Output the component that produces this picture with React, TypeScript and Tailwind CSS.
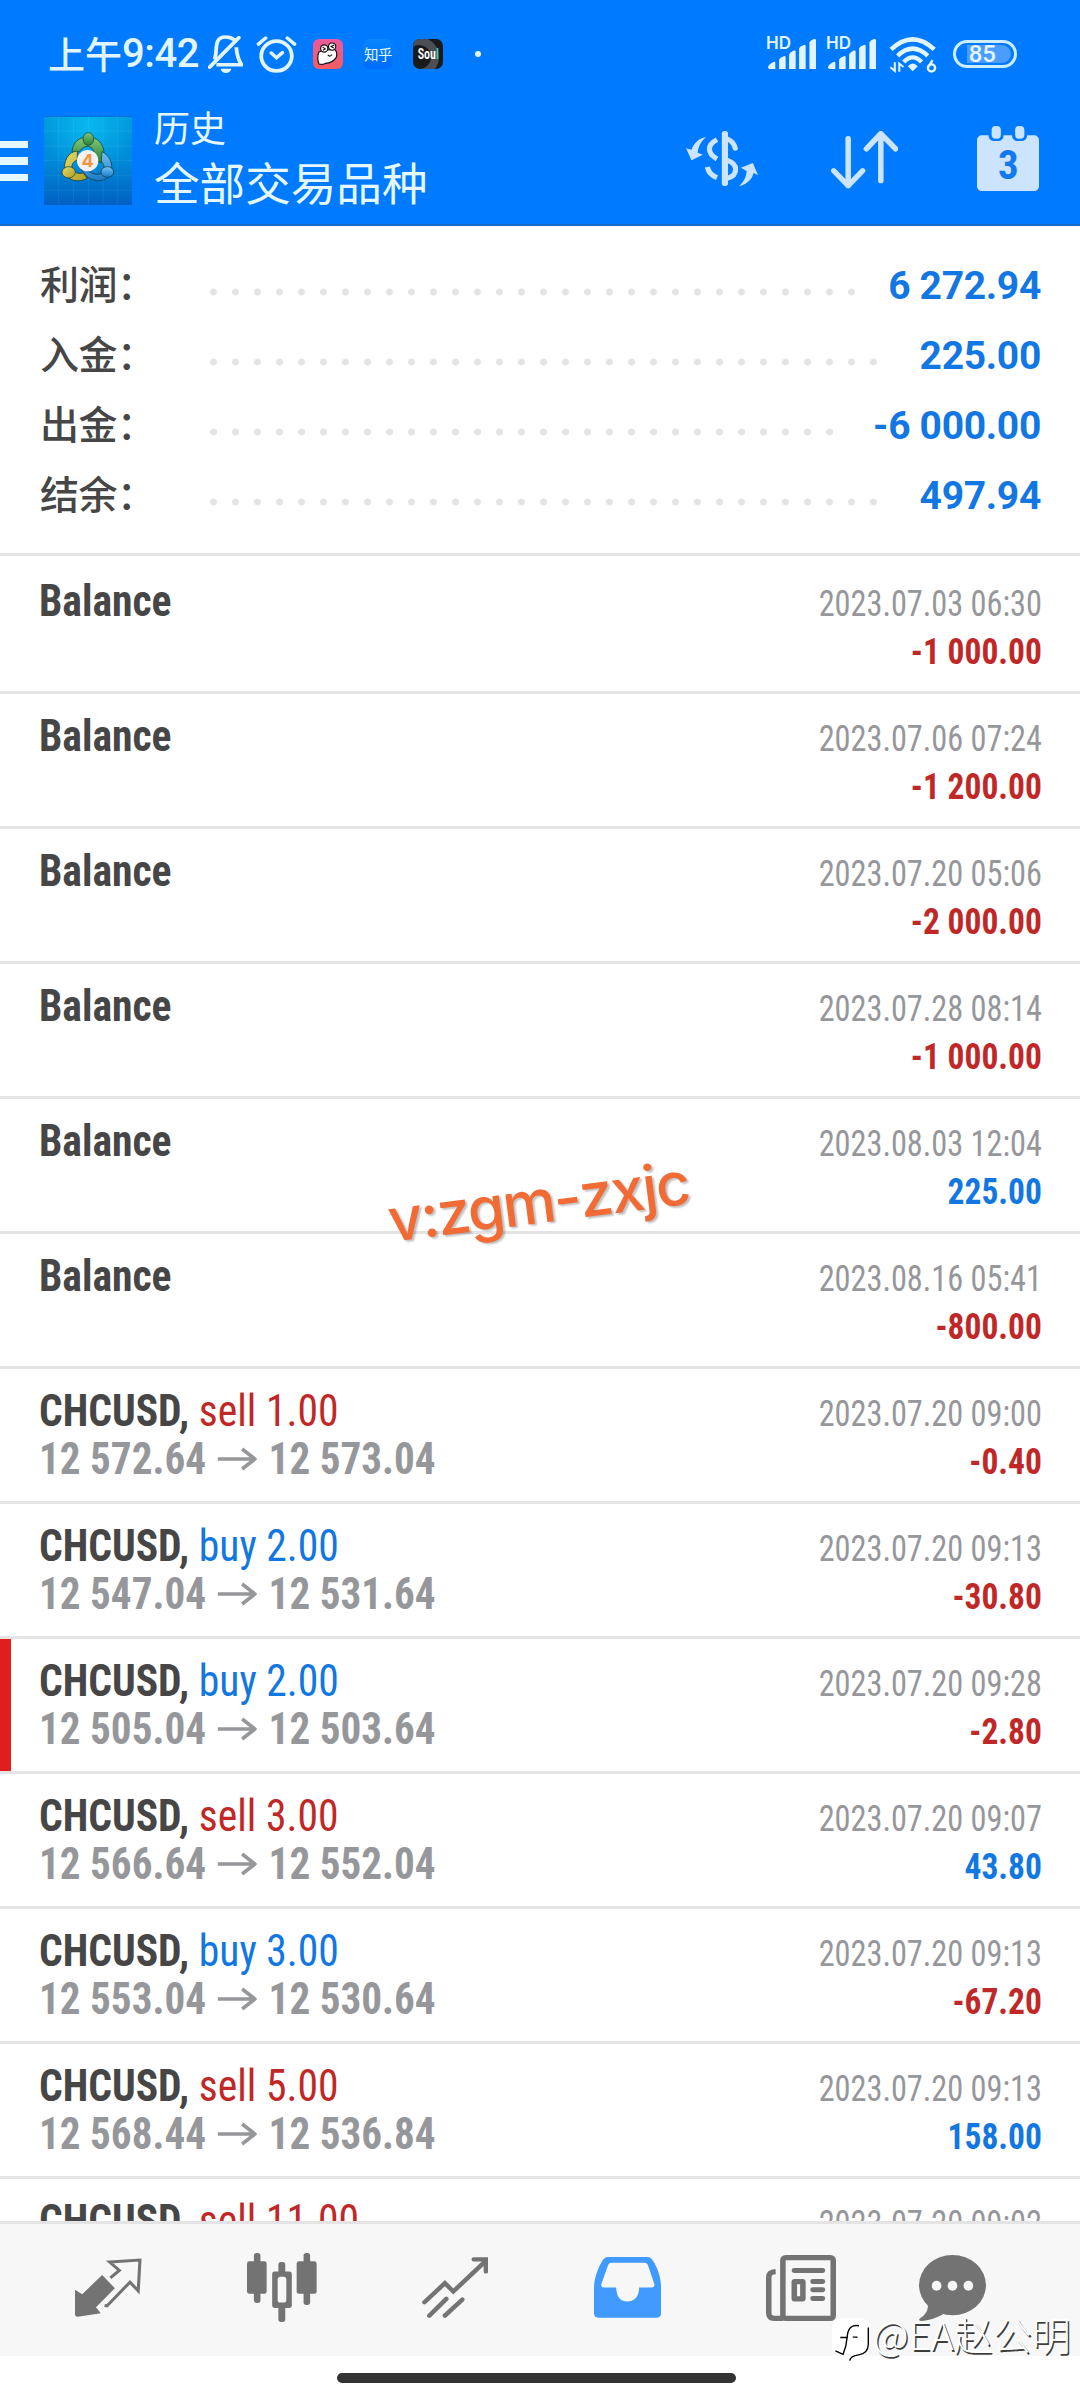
import type { ReactNode } from "react";

/** A drawing whose view box is stretched to the given pixel size. */
function Icon({ box, w, h, className = "", children }: { box: string; w: number; h: number; className?: string; children: ReactNode }) {
  return (
    <svg viewBox={box} width={w} height={h} preserveAspectRatio="none" fill="none" className={"shrink-0 " + className}>
      {children}
    </svg>
  );
}

const summary = [
  { label: "利润：", dots: 30, value: "6 272.94" },
  { label: "入金：", dots: 31, value: "225.00" },
  { label: "出金：", dots: 29, value: "-6 000.00" },
  { label: "结余：", dots: 31, value: "497.94" },
];

type Deal = { side?: string; from?: string; to?: string; time: string; profit?: string; mark?: boolean };

const deals: Deal[] = [
  { time: "2023.07.03 06:30", profit: "-1 000.00" },
  { time: "2023.07.06 07:24", profit: "-1 200.00" },
  { time: "2023.07.20 05:06", profit: "-2 000.00" },
  { time: "2023.07.28 08:14", profit: "-1 000.00" },
  { time: "2023.08.03 12:04", profit: "225.00" },
  { time: "2023.08.16 05:41", profit: "-800.00" },
  { side: "sell 1.00", from: "12 572.64", to: "12 573.04", time: "2023.07.20 09:00", profit: "-0.40" },
  { side: "buy 2.00", from: "12 547.04", to: "12 531.64", time: "2023.07.20 09:13", profit: "-30.80" },
  { side: "buy 2.00", from: "12 505.04", to: "12 503.64", time: "2023.07.20 09:28", profit: "-2.80", mark: true },
  { side: "sell 3.00", from: "12 566.64", to: "12 552.04", time: "2023.07.20 09:07", profit: "43.80" },
  { side: "buy 3.00", from: "12 553.04", to: "12 530.64", time: "2023.07.20 09:13", profit: "-67.20" },
  { side: "sell 5.00", from: "12 568.44", to: "12 536.84", time: "2023.07.20 09:13", profit: "158.00" },
  { side: "sell 11.00", time: "2023.07.20 09:02" },
];

function DealRow({ deal }: { deal: Deal }) {
  const buy = deal.side?.startsWith("buy");
  return (
    <div className="relative flex h-[135px] shrink-0 justify-between border-b-3 border-[#e4e4e4] pr-[38px] pl-[39px] whitespace-nowrap">
      {deal.mark && <div className="absolute top-0 left-0 h-[132px] w-[11px] bg-[#e01e1e]" />}
      <div className="pt-[18px] text-[44px] leading-[48px]">
        {deal.side ? (
          <>
            <div className="origin-left scale-x-[0.945]">
              <span className="font-bold text-[#464646]">CHCUSD,</span>{" "}
              <span className={buy ? "text-[#1277e0]" : "text-[#c02828]"}>{deal.side}</span>
            </div>
            {deal.from && (
              <div className="flex origin-left scale-x-[0.935] items-center font-bold text-[#96979b]">
                <span>{deal.from}</span>
                <Icon box="0 0 40 24" w={42} h={24} className="mr-[13px] ml-[12px]">
                  <path d="M0 12H38M25 2L38 12L25 22" stroke="currentColor" strokeWidth="3.6" />
                </Icon>
                <span>{deal.to}</span>
              </div>
            )}
          </>
        ) : (
          <div className="origin-left scale-x-[0.945] font-bold text-[#464646]">Balance</div>
        )}
      </div>
      <div className="pt-[21px] text-right text-[36px] leading-[48px]">
        <div className="origin-right scale-x-[0.897] text-[#96979b]">{deal.time}</div>
        {deal.profit && (
          <div
            className={
              deal.profit.startsWith("-")
                ? "origin-right scale-x-[0.93] font-bold text-[#c02828]"
                : "origin-right scale-x-[0.93] font-bold text-[#1277e0]"
            }
          >
            {deal.profit}
          </div>
        )}
      </div>
    </div>
  );
}

function Signal() {
  return (
    <div className="relative h-[34px] w-[51px]">
      <span className="absolute -top-[2px] left-0 font-[Inter] text-[17px] leading-[17px] font-semibold">HD</span>
      <Icon box="659 112 145 100" w={50} h={33}>
        <g fill="currentColor">
          <path d="M665 204Q665 198 672 193Q686 183 686 190V209H670Q665 209 665 204Z" />
          <path d="M697 181Q699 174 711 170Q716 169 716 174V209H697Z" />
          <path d="M726 166Q728 158 740 153Q745 152 745 157V209H726Z" />
          <path d="M755 147Q757 140 769 136Q774 135 774 140V209H755Z" />
          <path d="M785 129Q787 122 798 118Q804 117 804 122V209H785Z" />
        </g>
      </Icon>
    </div>
  );
}

function StatusBar() {
  return (
    <div className="flex h-[108px] items-center text-[#e2f5ff]">
      <div className="ml-[48px] flex w-[152px] items-center whitespace-nowrap">
        <span className="-mt-[3px] text-[37px] leading-[50px] font-medium">上午</span>
        <span className="font-[Roboto] text-[40px] leading-[50px] font-medium tracking-[-0.4px]">9:42</span>
      </div>
      <Icon box="604 106 100 115" w={35} h={38} className="ml-[8px]">
        <g stroke="currentColor" strokeWidth="11">
          <path d="M609 203L692 114" strokeLinecap="round" />
          <path d="M622 180C634 160 616 112 654 112Q670 112 680 121M685 143C686 166 690 180 700 196H628" />
        </g>
        <path d="M640 208H671Q667 221 655 221Q643 221 640 208Z" fill="currentColor" />
      </Icon>
      <Icon box="744 104 118 112" w={41} h={38} className="ml-[13px]">
        <g stroke="currentColor" strokeWidth="11" strokeLinecap="round">
          <circle cx="803" cy="166" r="44" />
          <path d="M751 131L772 113M834 113L855 131M788 157L803 171L820 156" strokeWidth="10" />
        </g>
      </Icon>
      <Icon box="39 27 91 91" w={30} h={30} className="ml-[16px]">
        <defs>
          <linearGradient id="pink" x1="0" y1="0" x2="0" y2="1">
            <stop offset="0" stopColor="#e85a9c" />
            <stop offset="1" stopColor="#f45c66" />
          </linearGradient>
        </defs>
        <rect x="39" y="27" width="91" height="91" rx="18" fill="url(#pink)" />
        <path d="M57 66Q50 84 57 103Q68 106 76 101Q100 100 110 82Q114 66 104 58L70 62Z" fill="#fff" stroke="#111" strokeWidth="3.5" />
        <circle cx="73" cy="56" r="11" fill="#fff" stroke="#111" strokeWidth="3.5" />
        <circle cx="97" cy="50" r="11" fill="#fff" stroke="#111" strokeWidth="3.5" />
        <path d="M68 51L76 57L69 61M103 45L94 50L102 54M84 75Q90 83 97 74" stroke="#111" strokeWidth="3.5" />
      </Icon>
      <div className="ml-[20px] flex size-[30px] items-center justify-center rounded-[7px] bg-linear-to-b from-[#0a86ff] to-[#006cff] text-[14.5px] leading-none tracking-[-0.4px] whitespace-nowrap">知乎</div>
      <div className="relative ml-[20px] flex size-[30px] items-center justify-center overflow-hidden rounded-[7px] bg-[#181a1c]">
        <div className="absolute -top-[2px] -left-[14px] size-[40px] rounded-full border-8 border-[#4b4e52]" />
        <span className="relative scale-x-[0.8] font-[Roboto] text-[15px] leading-none font-semibold text-white font-stretch-condensed">
          Sou<span className="text-[#35d0b8]">l</span>
        </span>
      </div>
      <div className="ml-[32px] size-[6px] rounded-full bg-current" />
      <div className="ml-[285px] flex items-center">
        <Signal />
        <div className="w-[9px]" />
        <Signal />
        <Icon box="1013 110 140 110" w={48} h={37} className="ml-[12px]">
          <g stroke="currentColor" strokeWidth="13">
            <path d="M1019 150Q1082 90 1145 150" />
            <path d="M1038 169Q1082 126 1126 169" />
            <path d="M1056 187Q1082 160 1108 187" />
          </g>
          <path d="M1068 200Q1082 184 1097 200L1082 215Z" fill="currentColor" />
          <path d="M1030 188V214L1017 203M1043 216V192L1055 202" stroke="currentColor" strokeWidth="6" />
          <path d="M1140 182L1129 200" stroke="currentColor" strokeWidth="7" />
          <circle cx="1137" cy="205" r="10.5" stroke="currentColor" strokeWidth="7" />
        </Icon>
        <div className="ml-[16px] flex h-[28px] w-[64px] items-center rounded-full border-3 border-[#cdeeff] px-[3px]">
          <div className="h-[18px] w-[8px]" />
          <div className="flex h-[18px] w-[46px] items-center rounded-r-full bg-[#4a9dff]">
            <span className="ml-[2px] font-[Roboto] text-[24px] leading-none font-medium">85</span>
          </div>
        </div>
      </div>
    </div>
  );
}

function AppLogo() {
  return (
    <Icon box="12 15 264 267" w={88} h={89} className="-mt-[1px] ml-[16px]">
      <defs>
        <linearGradient id="sky" x1="0" y1="0" x2="0" y2="1">
          <stop offset="0" stopColor="#0098dc" />
          <stop offset="0.5" stopColor="#008ad8" />
          <stop offset="1" stopColor="#0060c2" />
        </linearGradient>
        <radialGradient id="sun" cx="0.5" cy="0.1" r="0.55">
          <stop offset="0" stopColor="#08b8f0" />
          <stop offset="1" stopColor="#08b8f0" stopOpacity="0" />
        </radialGradient>
        <linearGradient id="green" x1="0" y1="0" x2="0" y2="1">
          <stop offset="0" stopColor="#86c878" />
          <stop offset="1" stopColor="#22803a" />
        </linearGradient>
        <linearGradient id="gold" x1="0" y1="0" x2="1" y2="1">
          <stop offset="0" stopColor="#e6dc6c" />
          <stop offset="1" stopColor="#b09c20" />
        </linearGradient>
        <linearGradient id="azure" x1="0" y1="0" x2="0" y2="1">
          <stop offset="0" stopColor="#74c4f0" />
          <stop offset="1" stopColor="#1a78c8" />
        </linearGradient>
      </defs>
      <rect x="12" y="15" width="264" height="267" fill="url(#sky)" />
      <rect x="12" y="15" width="264" height="267" fill="url(#sun)" />
      <path d="M12 16H276" stroke="#0468c8" strokeWidth="3" />
      <path d="M56 15V282M100 15V282M145 15V282M189 15V282M232 15V282M12 60H276M12 105H276M12 149H276M12 193H276M12 238H276" stroke="#fff" strokeOpacity="0.1" strokeWidth="2" />
      <g stroke="#123c34" strokeOpacity="0.7" strokeWidth="3">
        <path d="M96 124C98 92 118 78 145 78C172 78 192 98 192 128C192 140 188 150 182 156L160 140Q168 112 145 106Q128 106 118 122Z" fill="url(#green)" />
        <path d="M186 122C206 132 220 154 214 182C204 214 160 218 136 192L122 172L146 182Q170 196 186 186Q200 170 184 150Z" fill="url(#azure)" />
        <path d="M112 120C84 122 70 150 74 184C84 210 116 216 142 202L130 186Q104 192 96 172Q92 156 112 146Z" fill="url(#gold)" />
        <ellipse cx="145" cy="84" rx="16" ry="19" fill="url(#green)" />
        <ellipse cx="86" cy="184" rx="20" ry="17" fill="url(#gold)" />
        <ellipse cx="202" cy="183" rx="19" ry="16" fill="url(#azure)" />
      </g>
      <circle cx="143" cy="149" r="32" fill="#f6f0f0" />
      <text x="143" y="168" textAnchor="middle" fontFamily="Inter" fontWeight="700" fontSize="54" fill="#f2953f">4</text>
    </Icon>
  );
}

function Header() {
  return (
    <header className="h-[226px] shrink-0 border-b-2 border-[#1a69c8] bg-[#007aff]">
      <StatusBar />
      <div className="flex h-[106px] items-center text-[#e6f8ff]">
        <div className="flex w-[28px] flex-col gap-[9px]">
          <div className="h-[7px] bg-current" />
          <div className="h-[8px] bg-current" />
          <div className="h-[7px] bg-current" />
        </div>
        <AppLogo />
        <div className="-mt-[9px] ml-[22px] flex w-[532px] flex-col whitespace-nowrap">
          <span className="text-[36px] leading-[48px]">历史</span>
          <span className="text-[45.6px] leading-[62px]">全部交易品种</span>
        </div>
        <div className="-mt-[5px] flex items-center text-[#cce4ff]">
          <Icon box="424 392 209 165" w={72} h={55}>
            <path d="M482 411C462 413 446 430 440 448L424 444L440 480L473 463L458 457C460 440 466 425 482 411Z" fill="currentColor" />
            <path d="M578 557C598 554 616 538 620 518L633 524L618 488L583 502L600 512C599 530 592 545 578 557Z" fill="currentColor" />
            <rect x="528" y="392" width="18" height="165" rx="8" fill="currentColor" />
            <g stroke="currentColor" strokeWidth="15">
              <path d="M514 418Q492 430 492 446Q492 463 514 476M486 500Q490 522 514 532" />
              <path d="M544 416Q563 424 567 444" strokeLinecap="round" />
              <path d="M544 480Q568 488 568 507Q568 528 544 534" />
            </g>
          </Icon>
          <Icon box="846 392 195 175" w={67} h={58} className="mt-[2px] ml-[73px]">
            <path d="M896 415V557M854 512L896 557L938 512M991 542V400M949 446L991 400L1034 446" stroke="currentColor" strokeWidth="16" strokeLinecap="round" strokeLinejoin="round" />
          </Icon>
          <Icon box="1268 380 182 195" w={62} h={65} className="ml-[79px]">
            <rect x="1268" y="408" width="182" height="167" rx="14" fill="currentColor" />
            <rect x="1302" y="376" width="44" height="49" rx="16" fill="#007aff" />
            <rect x="1371" y="376" width="44" height="49" rx="16" fill="#007aff" />
            <rect x="1311" y="380" width="27" height="38" rx="12" fill="currentColor" />
            <rect x="1380" y="380" width="27" height="38" rx="12" fill="currentColor" />
            <text x="1360" y="540" textAnchor="middle" fontFamily="Roboto" fontWeight="700" fontSize="120" fill="#1279ee" className="font-stretch-semi-condensed">3</text>
          </Icon>
        </div>
      </div>
    </header>
  );
}

function NavBar() {
  return (
    <nav className="flex h-[135px] shrink-0 items-center border-t-3 border-[#e4e4e4] bg-[#f7f7f7] pb-[5px] pl-[22px] text-[#737373]">
      <div className="flex w-[173px] justify-center">
        <Icon box="218 237 195 176" w={67} h={59}>
          <path d="M218 332L239 345L297 288L334 327L279 384L293 402L226 412Q218 412 218 404Z" fill="currentColor" />
          <path d="M321 296L347 274L319 249L407 243L402 335L378 309L311 380L304 379" stroke="currentColor" strokeWidth="9" />
        </Icon>
      </div>
      <div className="flex w-[173px] justify-center">
        <Icon box="715 221 203 206" w={70} h={69}>
          <g fill="currentColor">
            <rect x="735" y="221" width="19" height="149" rx="8" />
            <rect x="715" y="246" width="57" height="97" rx="7" />
            <rect x="879" y="221" width="19" height="155" rx="8" />
            <rect x="859" y="246" width="58" height="97" rx="7" />
            <rect x="806" y="248" width="20" height="179" rx="8" />
            <rect x="788" y="276" width="57" height="109" rx="7" />
          </g>
          <rect x="804" y="292" width="25" height="77" rx="8" fill="#f7f7f7" />
        </Icon>
      </div>
      <div className="flex w-[173px] justify-center">
        <Icon box="1223 230 190 182" w={66} h={61}>
          <path d="M1230 365L1289 308L1313 333L1405 243M1372 237H1407V273M1244 405L1293 355M1289 405L1339 357" stroke="currentColor" strokeWidth="13" strokeLinecap="round" strokeLinejoin="miter" />
        </Icon>
      </div>
      <div className="flex w-[173px] justify-center">
        <Icon box="157 230 193 182" w={67} h={61}>
          <path
            fill="#419bff"
            fillRule="evenodd"
            d="M157 320C158 290 170 260 182 240Q188 230 198 230H311Q320 230 326 240C340 262 350 290 350 320V398Q350 411 338 411H170Q157 411 157 398ZM207 247H302Q309 247 312 253L331 311Q332 321 322 321H287C287 350 271 363 253 363C235 363 221 350 221 321H187Q176 321 178 311L198 253Q201 247 207 247Z"
          />
        </Icon>
      </div>
      <div className="flex w-[174px] justify-center">
        <Icon box="656 221 203 199" w={70} h={66}>
          <g stroke="currentColor" strokeWidth="16">
            <rect x="705" y="229" width="146" height="183" rx="8" />
            <path d="M684 271Q664 272 664 288V396Q664 412 680 412H705" />
            <rect x="738" y="301" width="25" height="52" rx="1" />
            <path d="M738 268H820M792 301H820M792 326H820M792 352H820" strokeLinecap="round" strokeWidth="15" />
          </g>
        </Icon>
      </div>
      <div className="flex w-[129px] justify-center">
        <Icon box="1102 221 194 199" w={67} h={66}>
          <g fill="currentColor">
            <ellipse cx="1199" cy="312" rx="97" ry="91" />
            <path d="M1127 368Q1132 395 1103 414Q1100 420 1110 420Q1140 418 1172 400Z" />
          </g>
          <g fill="#f7f7f7">
            <ellipse cx="1153" cy="314" rx="14" ry="15" />
            <ellipse cx="1199" cy="314" rx="14" ry="15" />
            <ellipse cx="1245" cy="314" rx="14" ry="15" />
          </g>
        </Icon>
      </div>
    </nav>
  );
}

export default function App() {
  return (
    <div className="relative flex h-[2400px] w-[1080px] flex-col overflow-hidden bg-white font-['Noto_Sans_CJK_SC',sans-serif]">
      <Header />
      <section className="flex h-[330px] shrink-0 flex-col border-b-3 border-[#e4e4e4] pt-[24px]">
        {summary.map((s) => (
          <div key={s.label} className="flex h-[70px] items-center pr-[39px] pl-[40px] whitespace-nowrap">
            <span className="-mt-[7px] w-[163px] text-[39px] leading-[70px] font-medium tracking-[-0.5px] text-[#464646]">{s.label}</span>
            <div
              className="mt-[14px] h-[8px] bg-[radial-gradient(circle_at_10.5px_4px,#e4e4e4_3px,transparent_4px)] bg-size-[22px_8px]"
              style={{ width: s.dots * 22 }}
            />
            <span className="mt-[2px] ml-auto font-[Roboto] text-[39px] leading-[70px] font-bold tracking-[-0.3px] text-[#1277e2]">{s.value}</span>
          </div>
        ))}
      </section>
      <main className="flex h-[1665px] shrink-0 flex-col overflow-hidden pt-[3px] font-[Roboto] font-stretch-condensed">
        {deals.map((d, i) => (
          <DealRow key={i} deal={d} />
        ))}
      </main>
      <NavBar />
      <div className="flex h-[44px] justify-center pt-[17px] pr-[7px]">
        <div className="h-[10px] w-[399px] rounded-full bg-[#333]" />
      </div>
      <div className="absolute top-[1161px] left-[387px] -rotate-[7.3deg] font-[Inter] text-[60px] leading-[80px] font-medium tracking-[-1.8px] whitespace-nowrap text-[#f26b35] text-shadow-[2px_2px_2px_rgb(0_0_0/0.25)]">
        v:zgm-zxjc
      </div>
      <div className="absolute top-[2304px] left-[832px] flex items-center whitespace-nowrap text-white">
        <Icon box="848 422 107 128" w={37} h={43} className="mt-[14px]">
          <path d="M878 422H930Q955 424 955 450V500Q953 535 925 535H912L900 550L902 530L880 522L868 534Q850 530 848 505V450Q850 424 878 422Z" fill="#fff" />
          <path d="M926 445Q898 440 893 470L888 505L880 530L858 520M872 480H894M908 479H922M899 549Q902 535 925 532Q952 528 953 500V450" stroke="#000" strokeWidth="4" />
        </Icon>
        <span className="ml-[4px] text-[39px] leading-[56px] font-light text-shadow-[1.5px_1.5px_0px_rgb(0_0_0/0.75)]">@EA赵公明</span>
      </div>
    </div>
  );
}
